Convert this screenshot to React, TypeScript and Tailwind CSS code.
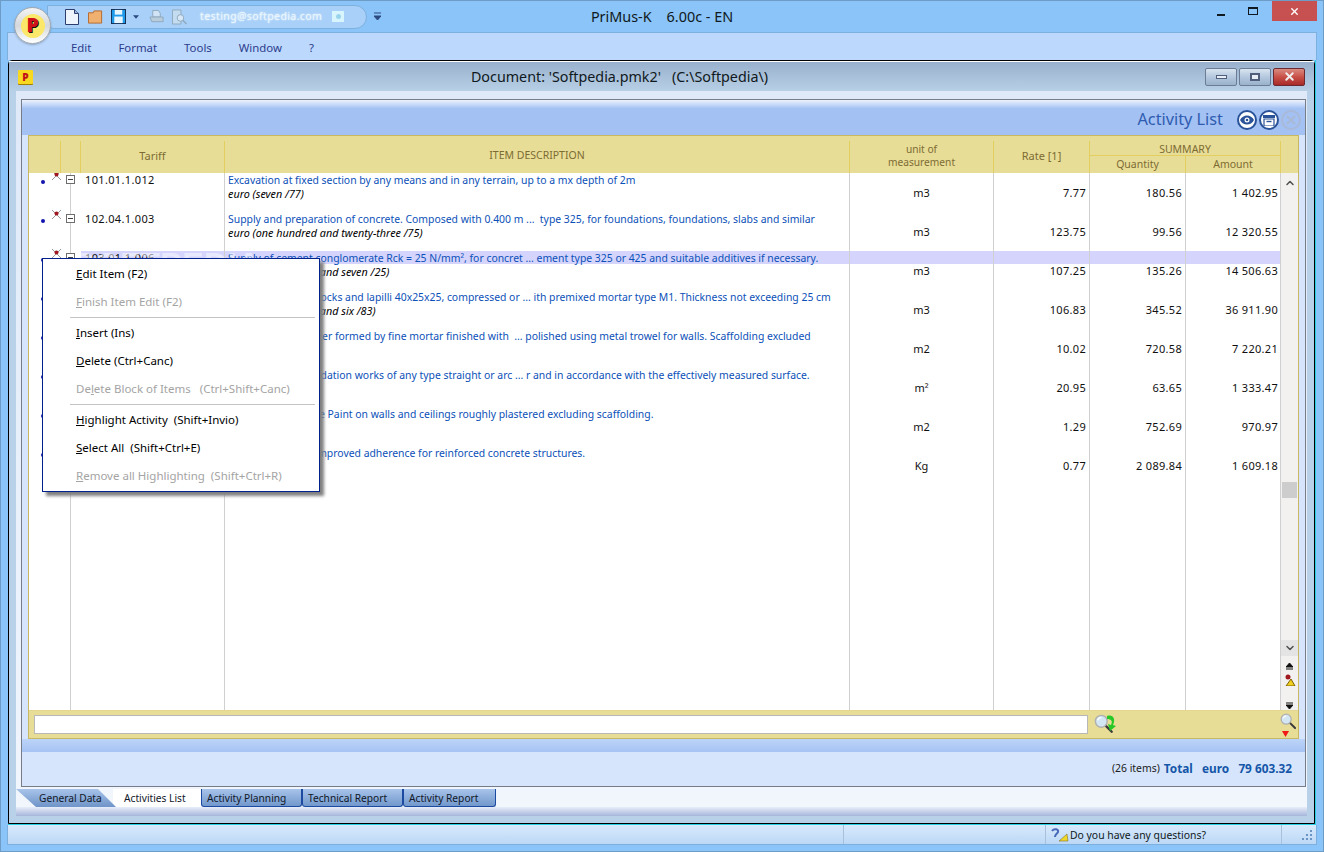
import React from "react";
import { ChevronDown, ChevronUp, X } from "lucide-react";

const rows = [
  { code: "101.01.1.012", text: "Excavation at fixed section by any means and in any terrain, up to a mx depth of 2m", price: "euro (seven /77)", unit: "m3", rate: "7.77", qty: "180.56", amount: "1 402.95" },
  { code: "102.04.1.003", text: "Supply and preparation of concrete. Composed with 0.400 m ...  type 325, for foundations, foundations, slabs and similar", price: "euro (one hundred and twenty-three /75)", unit: "m3", rate: "123.75", qty: "99.56", amount: "12 320.55" },
  { code: "103.01.1.006", text: "Supply of cement conglomerate Rck = 25 N/mm², for concret ... ement type 325 or 425 and suitable additives if necessary.", price: "euro (one hundred and seven /25)", unit: "m3", rate: "107.25", qty: "135.26", amount: "14 506.63", active: true },
  { code: "104.02.1.001", text: "Masonry of solid blocks and lapilli 40x25x25, compressed or ... ith premixed mortar type M1. Thickness not exceeding 25 cm", price: "euro (one hundred and six /83)", unit: "m3", rate: "106.83", qty: "345.52", amount: "36 911.90" },
  { code: "105.01.1.004", text: "Finishing with plaster formed by fine mortar finished with  ... polished using metal trowel for walls. Scaffolding excluded", price: "euro (ten /02)", unit: "m2", rate: "10.02", qty: "720.58", amount: "7 220.21" },
  { code: "106.03.1.002", text: "Earthwork for foundation works of any type straight or arc ... r and in accordance with the effectively measured surface.", price: "euro (twenty /95)", unit: "m²", rate: "20.95", qty: "63.65", amount: "1 333.47" },
  { code: "107.01.1.007", text: "Application of white Paint on walls and ceilings roughly plastered excluding scaffolding.", price: "euro (one /29)", unit: "m2", rate: "1.29", qty: "752.69", amount: "970.97" },
  { code: "108.02.1.003", text: "Steel bars having improved adherence for reinforced concrete structures.", price: "euro (zero /77)", unit: "Kg", rate: "0.77", qty: "2 089.84", amount: "1 609.18" },
];

const gridCols = "grid grid-cols-[41px_154px_625px_144px_96px_96px_96px]";

function RedCross() {
  return (
    <svg width="11" height="11" viewBox="0 0 11 11" className="shrink-0">
      <path d="M1 1l9 9M10 1l-9 9" stroke="#9a9a9a" strokeWidth="1" />
      <circle cx="5.5" cy="4.5" r="2" fill="#a01820" />
    </svg>
  );
}

function TreeBox() {
  return (
    <span className="flex h-[9px] w-[9px] items-center justify-center border border-[#6e6e6e] bg-white">
      <span className="h-px w-[5px] bg-[#404040]" />
    </span>
  );
}

function Row({ r }: { r: (typeof rows)[number] }) {
  return (
    <div className={`${gridCols} relative h-[39px] text-[11px] leading-[13px]`}>
      {r.active && <div className="absolute left-[52px] top-0 h-[13px] w-[1200px] bg-[#d4d4fc]" />}
      <div className="relative flex items-start pl-[12px] pt-[6px]">
        <span className="mt-[1px] h-[4px] w-[4px] rounded-full bg-[#1414b0]" />
        <span className="-mt-[9px] ml-[6px]"><RedCross /></span>
      </div>
      <div className="relative border-l border-[#d0d0d0]">
        <div className="flex h-[13px] items-center">
          <span className="-ml-[5px] mr-[10px]"><TreeBox /></span>
          <span className="text-[#101010] tracking-[0.35px]">{r.code}</span>
        </div>
      </div>
      <div className="relative min-w-0 whitespace-pre border-l border-[#d0d0d0] pl-[3px] pt-[1px]">
        <div className="text-[10.4px] text-[#0b50b8]">{r.text}</div>
        <div className="text-[10.8px] italic text-black">{r.price}</div>
      </div>
      <div className="relative border-l border-[#d0d0d0] pt-[13px] text-center text-[#101010]">{r.unit}</div>
      <div className="relative border-l border-[#d0d0d0] pr-[3px] pt-[13px] text-right text-[#101010] tracking-[0.3px]">{r.rate}</div>
      <div className="relative border-l border-[#d0d0d0] pr-[3px] pt-[13px] text-right text-[#101010] tracking-[0.3px]">{r.qty}</div>
      <div className="relative border-l border-[#d0d0d0] pr-[3px] pt-[13px] text-right text-[#101010] tracking-[0.3px]">{r.amount}</div>
    </div>
  );
}

function Magnifier({ size = 22 }: { size?: number }) {
  return (
    <svg width={size} height={size} viewBox="0 0 22 22">
      <path d="M12.5 12.5l7 7" stroke="#3a3a3a" strokeWidth="2.6" strokeLinecap="round" />
      <circle cx="8" cy="8" r="6.5" fill="#d3e6f4" stroke="#b0b0b0" strokeWidth="1.6" />
      <path d="M4 7a4 4 0 0 1 4-3" stroke="#fff" strokeWidth="1.4" fill="none" />
    </svg>
  );
}

function Separator() {
  return (
    <div className="flex h-[3px] items-center pl-[27px] pr-[4px]">
      <div className="h-px w-full bg-[#c4c4c4]" />
    </div>
  );
}

function MenuItem({ u, text, off }: { u: string; text: string; off?: boolean }) {
  const at = text.indexOf(u);
  return (
    <div className={`flex h-[28px] items-center whitespace-pre pl-[33px] text-[11.5px] ${off ? "text-[#a4a4a4]" : "text-black"}`}>
      <span>
        {text.slice(0, at)}
        <span className="underline">{u}</span>
        {text.slice(at + 1)}
      </span>
    </div>
  );
}

function RoundIcon({ children, off }: { children: React.ReactNode; off?: boolean }) {
  return (
    <span className={`flex h-[20px] w-[20px] items-center justify-center rounded-full border-2 ${off ? "border-[#a9b9d8] bg-transparent" : "border-[#2a5298] bg-white"}`}>
      {children}
    </span>
  );
}

function MdiButton({ children, red }: { children: React.ReactNode; red?: boolean }) {
  return (
    <span className={`flex h-[18px] w-[32px] items-center justify-center rounded-[2px] border ${red ? "border-[#6c2a30] bg-gradient-to-b from-[#d88a80] via-[#c85048] to-[#a82a28]" : "border-[#6c7c94] bg-gradient-to-b from-[#d8e4f0] via-[#b4c8de] to-[#9ab2cc]"}`}>
      {children}
    </span>
  );
}

const tabs = ["Activity Planning", "Technical Report", "Activity Report"];
const menus = ["Edit", "Format", "Tools", "Window", "?"];

export default function App() {
  return (
    <div className="relative flex h-[852px] w-[1324px] flex-col overflow-hidden border border-[#6d9cc6] bg-[#8ac4f8] [font-family:'Noto_Sans',sans-serif] text-black">
      {/* Title bar */}
      <div className="grid h-[31px] grid-cols-[1fr_auto_1fr] items-center">
        <div className="flex items-center pl-[46px]">
          <div className="flex h-[24px] w-[320px] items-center gap-[9px] rounded-r-[14px] rounded-bl-[8px] border border-[#7db0de] bg-[#a8d0f8] pl-[17px]">
            <svg width="14" height="16" viewBox="0 0 14 16" className="shrink-0"><path d="M.5.5h9l4 4v11H.5z" fill="#eef4fb" stroke="#2c3e6c" /><path d="M9.5.5v4h4" fill="#9ab4d8" stroke="#2c3e6c" /></svg>
            <svg width="15" height="14" viewBox="0 0 16 14" className="shrink-0"><path d="M.5 2.500h5l1-2h8v13H.5z" fill="#f0b070" stroke="#b8662a" /></svg>
            <svg width="15" height="15" viewBox="0 0 16 16" className="-ml-[1px] shrink-0"><rect x=".5" y=".5" width="15" height="15" fill="#1f9ae8" stroke="#102a50" /><rect x="3.500" y="8" width="9" height="7" fill="#e8f6ff" /><rect x="4" y="1" width="8" height="5" fill="#e8f6ff" /></svg>
            <svg width="6" height="4" viewBox="0 0 7 4" className="-ml-[2px] shrink-0"><path d="M0 0h7L3.500 4z" fill="#2c4a80" /></svg>
            <svg width="15" height="16" viewBox="0 0 16 16" className="ml-[1px] shrink-0"><path d="M4 1h6l2 3v4H4z" fill="#d0e4f6" stroke="#8fa8bc" /><path d="M1 8h14v5H3z" fill="#b8ccdc" stroke="#8fa8bc" /></svg>
            <svg width="15" height="16" viewBox="0 0 16 16" className="-ml-[1px] shrink-0"><path d="M.5.5h9v15h-9z" fill="#c4dcf0" stroke="#8fa8bc" /><circle cx="9" cy="9" r="3.500" fill="#d8e8f6" stroke="#8fa8bc" /><path d="M11.500 11.500l4 4" stroke="#8fa8bc" strokeWidth="1.500" /></svg>
            <span className="ml-[4px] whitespace-pre text-[10.5px] tracking-[0.4px] text-[#e8f6ff] [text-shadow:0_0_2px_#fff]">testing@softpedia.com</span>
            <span className="ml-[1px] flex h-[11px] w-[12px] shrink-0 items-center justify-center bg-[#d8f4fc]"><span className="h-[5px] w-[5px] rounded-full bg-[#9ad4ec]" /></span>
          </div>
          <svg width="7" height="9" viewBox="0 0 7 9" className="ml-[7px]"><path d="M0 1h7M0 4h7L3.500 8z" stroke="#2c4a80" fill="#2c4a80" /></svg>
        </div>
        <div className="whitespace-pre text-[14.4px] text-[#101820]">PriMus-K    6.00c - EN</div>
        <div className="flex h-full items-start justify-end pr-[6px]">
          <span className="flex h-[20px] w-[26px] items-end justify-center pb-[5px]"><span className="h-[2px] w-[8px] bg-[#101820]" /></span>
          <span className="ml-[6px] flex h-[20px] w-[26px] items-center justify-center"><span className="h-[8px] w-[10px] border border-t-2 border-[#101820]" /></span>
          <span className="ml-[6px] flex h-[20px] w-[45px] items-center justify-center bg-[#c75050] text-white"><X size={11} strokeWidth={3} /></span>
        </div>
      </div>

      {/* Menu bar */}
      <div className="mx-[6px] flex h-[28px] items-center gap-[27px] border-x border-t border-[#7db0de] bg-[#bcd8fc] pl-[63px] pt-[2px] text-[11.4px] text-[#2c3c8c]">
        {menus.map((m) => (
          <span key={m}>{m}</span>
        ))}
      </div>

      {/* Document window */}
      <div className="mx-[7px] flex h-[765px] flex-col border-b border-r border-[#28d0e4]">
        <div className="flex min-h-0 flex-1 flex-col rounded-t-[4px] border border-black bg-[#b8d0e8]">
          <div className="grid h-[30px] shrink-0 grid-cols-[1fr_auto_1fr] items-center border-t border-white bg-gradient-to-b from-[#98b0cc] to-[#b8d0e6] pl-[9px] pr-[9px]">
            <div>
              <span className="flex h-[14px] w-[15px] items-center justify-center rounded-[1px] bg-[#f8d820] text-[10px] font-black leading-none text-[#c01018] shadow-[0_1px_0_#a08000]">P</span>
            </div>
            <div className="whitespace-pre pr-[84px] text-[14.3px] text-[#101820]">Document: 'Softpedia.pmk2'   (C:\Softpedia\)</div>
            <div className="flex justify-end gap-[2px]">
              <MdiButton><span className="h-[4px] w-[11px] border border-[#50607c] bg-[#e8eef6]" /></MdiButton>
              <MdiButton><span className="h-[8px] w-[10px] border-2 border-[#50607c] bg-[#e8eef6]" /></MdiButton>
              <MdiButton red><X size={13} strokeWidth={3.500} className="text-[#f0f0f0]" /></MdiButton>
            </div>
          </div>

          {/* Client area */}
          <div className="ml-[7px] mr-[7px] flex min-h-0 flex-1 flex-col bg-gradient-to-b from-[#dfe9f8] via-[#e8f0fb] to-[#f2f6fd] pt-[8px]">
            <div className="ml-[5px] mr-[1px] flex h-[688px] shrink-0 flex-col border border-[#767c88] bg-[#d6e5fb]">
              <div className="flex h-[35px] shrink-0 items-end justify-end gap-[2px] bg-gradient-to-b from-[#eef3fd] via-[#a3c1f3] via-25% to-[#a3c1f3] pb-[5px] pr-[4px]">
                <span className="mr-[12px] text-[16.3px] leading-[22px] text-[#2f5cb0]">Activity List</span>
                <RoundIcon>
                  <svg width="14" height="10" viewBox="0 0 14 10"><path d="M0 5c3-6 11-6 14 0-3 6-11 6-14 0z" fill="#2a5298" /><circle cx="7" cy="5" r="2.500" fill="#fff" /><circle cx="7" cy="5" r="1.300" fill="#2a5298" /></svg>
                </RoundIcon>
                <RoundIcon>
                  <svg width="12" height="11" viewBox="0 0 12 11"><path d="M0 0h12v3H0z" fill="#2a5298" /><path d="M1 4h10v7H1z" fill="none" stroke="#2a5298" strokeWidth="1.200" /><path d="M3.500 6.500h5" stroke="#2a5298" strokeWidth="1.400" /></svg>
                </RoundIcon>
                <RoundIcon off>
                  <svg width="12" height="12" viewBox="0 0 12 12"><path d="M2 2l8 8M10 2l-8 8" stroke="#a9b9d8" strokeWidth="2.400" /></svg>
                </RoundIcon>
              </div>

              {/* Table */}
              <div className="ml-[6px] mr-[6px] flex h-[604px] shrink-0 flex-col border border-[#c8b864]">
                <div className="grid h-[37px] shrink-0 grid-cols-[31px_20px_144px_625px_144px_96px_192px_17px] bg-[#e8dd96] pt-[5px] text-center text-[11px] leading-[13px] text-[#7c6c34]">
                  <div />
                  <div className="border-l border-[#e2cf60]" />
                  <div className="flex items-center justify-center border-l border-[#e2cf60] pb-[3px]">Tariff</div>
                  <div className="flex items-center justify-center border-l border-[#e2cf60] pb-[3px] text-[10.500px]">ITEM DESCRIPTION</div>
                  <div className="flex items-center justify-center border-l border-[#e2cf60] pb-[2px] text-[10.2px]">unit of<br />measurement</div>
                  <div className="flex items-center justify-center border-l border-[#e2cf60] pb-[3px]">Rate [1]</div>
                  <div className="flex flex-col border-x border-[#e2cf60]">
                    <div className="h-[15px] border-b border-[#e2cf60] pt-[2px] text-[10.500px]">SUMMARY</div>
                    <div className="grid flex-1 grid-cols-2 items-center text-[10.5px]">
                      <div>Quantity</div>
                      <div className="flex h-full items-center justify-center border-l border-[#e2cf60]">Amount</div>
                    </div>
                  </div>
                  <div />
                </div>

                <div className="flex min-h-0 flex-1 bg-white">
                  <div className="flex min-w-0 flex-1 flex-col overflow-hidden">
                    {rows.map((r) => (
                      <Row key={r.code} r={r} />
                    ))}
                    <div className={`${gridCols} flex-1`}>
                      <div />
                      <div className="border-l border-[#d0d0d0]" />
                      <div className="border-l border-[#d0d0d0]" />
                      <div className="border-l border-[#d0d0d0]" />
                      <div className="border-l border-[#d0d0d0]" />
                      <div className="border-l border-[#d0d0d0]" />
                      <div className="border-l border-[#d0d0d0]" />
                    </div>
                  </div>
                  <div className="flex w-[18px] shrink-0 flex-col items-center border-l border-[#d0d0d0] bg-[#f2f1ef] text-[#505050]">
                    <ChevronUp size={12} strokeWidth={3} className="mt-[4px]" />
                    <div className="mt-[293px] h-[16px] w-[15px] bg-[#cdcdcd]" />
                    <div className="mt-[142px] flex h-[16px] w-full items-center justify-center bg-[#e4e4e4]">
                      <ChevronDown size={12} strokeWidth={3} />
                    </div>
                    <svg width="7" height="7" viewBox="0 0 7 7" className="mt-[7px]"><path d="M3.500 0L7 4H0zM0 6h7" fill="#101010" stroke="#101010" /></svg>
                    <svg width="12" height="13" viewBox="0 0 12 13" className="mt-[3px]"><path d="M2 13l5-7 4 7z" fill="#f0d020" stroke="#806000" /><circle cx="4" cy="4" r="2.500" fill="#a01820" /></svg>
                    <svg width="7" height="7" viewBox="0 0 7 7" className="mt-[16px]"><path d="M3.500 7L7 3H0zM0 1h7" fill="#101010" stroke="#101010" /></svg>
                  </div>
                </div>

                <div className="flex h-[28px] shrink-0 items-center border-t border-[#e2d690] bg-[#e8dd96] pl-[5px]">
                  <div className="h-[19px] w-[1054px] border border-[#b8b8b8] bg-white" />
                  <span className="relative ml-[6px] h-[22px] w-[22px]">
                    <Magnifier size={20} />
                    <svg width="12" height="18" viewBox="0 0 12 18" className="absolute left-[11px] top-0"><path d="M2 2c6-2 9 3 6 9l3 1-6 5-2-7 3 1c2-4 0-6-4-6z" fill="#28c828" /></svg>
                  </span>
                  <span className="relative ml-auto h-[24px] w-[18px]">
                    <Magnifier size={17} />
                    <svg width="7" height="6" viewBox="0 0 7 6" className="absolute bottom-0 left-[2px]"><path d="M0 0h7L3.500 6z" fill="#f01818" /></svg>
                  </span>
                </div>
              </div>

              <div className="h-[13px] shrink-0 bg-gradient-to-b from-[#bcd4f8] to-[#a6c3f3]" />
              <div className="flex flex-1 items-center justify-end gap-[4px] whitespace-pre pr-[13px] text-[10.4px]">
                <span className="text-[#202020]">(26 items)</span>
                <span className="text-[11.8px] font-bold text-[#1556a8]">Total   euro   79 603.32</span>
              </div>
            </div>

            {/* Tabs */}
            <div className="mt-[2px] flex h-[18px] shrink-0 text-[10.2px] leading-[18px] text-[#101828]">
              <div className="w-[100px] bg-gradient-to-b from-[#a8c4ea] to-[#6f94c8] pl-[23px] [clip-path:polygon(0_0,82%_0,100%_100%,20%_100%)]">General Data</div>
              <div className="-ml-[3px] w-[88px] bg-white pl-[11px]">Activities List</div>
              {tabs.map((t) => (
                <div key={t} className="w-[101px] rounded-b-[3px] border-x border-b border-[#1c4aa0] bg-gradient-to-b from-[#a8c4ea] to-[#7298cc] pl-[5px] last:w-[93px]">{t}</div>
              ))}
            </div>
            <div className="mt-auto h-[9px] shrink-0 bg-gradient-to-b from-[#e8eefa] to-[#a6b6da]" />
          </div>
          <div className="h-[7px] shrink-0" />
        </div>
      </div>

      {/* Status bar */}
      <div className="mx-[6px] flex h-[20px] shrink-0 items-stretch border-x border-b border-[#7db0de] bg-gradient-to-b from-[#d8eafc] to-[#bcd8f6] text-[10.4px] leading-[20px] text-[#101820]">
        <div className="w-[836px] border-r border-[#a8c0dc]" />
        <div className="w-[202px] border-r border-[#a8c0dc]" />
        <div className="flex w-[236px] items-center gap-[1px] border-r border-[#a8c0dc] pl-[5px] pt-[1px]">
          <svg width="18" height="14" viewBox="0 0 18 14"><path d="M1 3c2-3 7-2 6 1-1 2-3 2-3 5" fill="none" stroke="#4868b8" strokeWidth="2" /><path d="M8 13l8-7 1 7z" fill="#f0d828" stroke="#807030" strokeWidth=".6" /></svg>
          <span>Do you have any questions?</span>
        </div>
        <div className="flex flex-1 items-end justify-end pb-[3px] pr-[3px]">
          <svg width="11" height="11" viewBox="0 0 11 11" fill="#6a94c4"><rect x="8" y="0" width="2" height="2" /><rect x="4" y="4" width="2" height="2" /><rect x="8" y="4" width="2" height="2" /><rect x="0" y="8" width="2" height="2" /><rect x="4" y="8" width="2" height="2" /><rect x="8" y="8" width="2" height="2" /></svg>
        </div>
      </div>

      {/* App logo */}
      <div className="absolute left-[13px] top-[6px] flex h-[37px] w-[37px] items-center justify-center rounded-full border border-[#a0a8b0] bg-gradient-to-b from-[#f4f4f4] via-[#d4d8dc] to-[#ffffff] shadow-[0_1px_2px_#60708080]">
        <span className="flex h-[24px] w-[24px] items-center justify-center rounded-full bg-[#fbe86a] text-[19px] font-black leading-none text-[#d01018] [text-shadow:1px_1px_0_#101010]">P</span>
      </div>

      {/* Watermark, sits under the context menu */}
      <div className="absolute left-[72px] top-[243px] text-[32px] font-bold leading-[40px] tracking-[0.5px] text-white/50 [font-family:'Liberation_Sans',sans-serif]">SOFTPEDIA</div>

      {/* Context menu */}
      <div className="absolute left-[41px] top-[257px] h-[234px] w-[278px] border border-[#00208c] bg-white pt-[1px] shadow-[4px_4px_3px_#808080]">
        <MenuItem u="E" text="Edit Item (F2)" />
        <MenuItem u="F" text="Finish Item Edit (F2)" off />
        <Separator />
        <MenuItem u="I" text="Insert (Ins)" />
        <MenuItem u="D" text="Delete (Ctrl+Canc)" />
        <MenuItem u="l" text="Delete Block of Items   (Ctrl+Shift+Canc)" off />
        <Separator />
        <MenuItem u="H" text="Highlight Activity  (Shift+Invio)" />
        <MenuItem u="S" text="Select All  (Shift+Ctrl+E)" />
        <MenuItem u="R" text="Remove all Highlighting  (Shift+Ctrl+R)" off />
      </div>
    </div>
  );
}
